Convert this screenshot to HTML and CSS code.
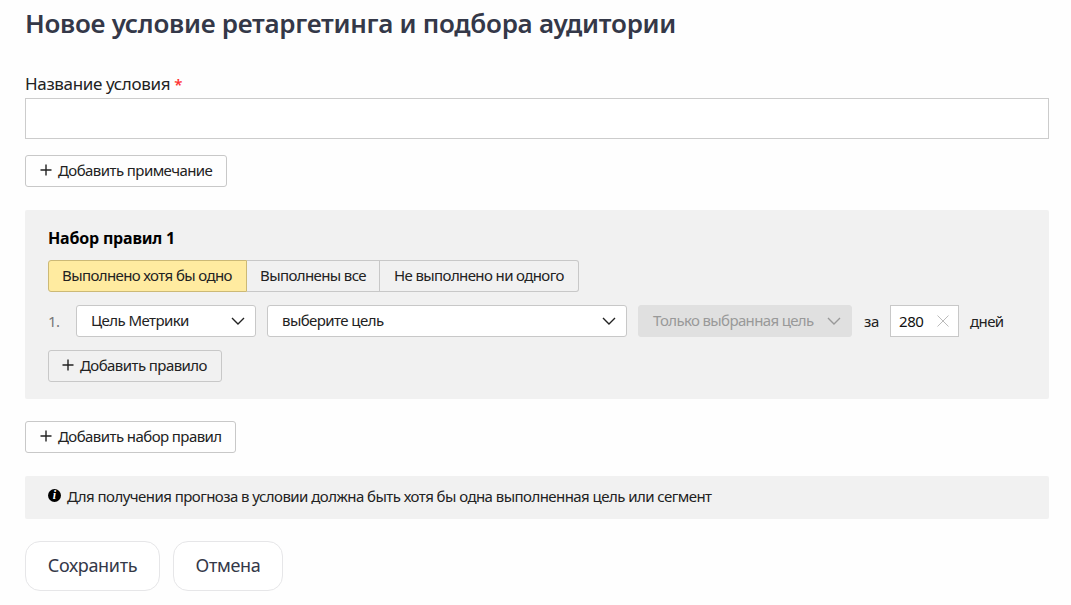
FILE: index.html
```html
<!DOCTYPE html>
<html lang="ru">
<head>
    <meta charset="UTF-8">
    <meta name="viewport" content="width=device-width, initial-scale=1.0">
    <title>Новое условие ретаргетинга</title>
    <link rel="stylesheet" href="styles.css">
</head>
<body>
    <h1>Новое условие ретаргетинга и подбора аудитории</h1>

    <label class="field-label" for="conditionName"><span class="label-text">Название условия</span> <span class="required">*</span></label>
    <input class="name-input" id="conditionName" type="text">

    <button class="btn add-note">
        <svg class="plus" viewBox="0 0 12 12"><path d="M6 0.5V11.5M0.5 6H11.5"/></svg>
        <span>Добавить примечание</span>
    </button>

    <div class="rules-box">
        <h2>Набор правил 1</h2>

        <div class="tabs">
            <button class="tab tab-any active"><span>Выполнено хотя бы одно</span></button>
            <button class="tab tab-all"><span>Выполнены все</span></button>
            <button class="tab tab-none"><span>Не выполнено ни одного</span></button>
        </div>

        <div class="rule">
            <span class="rule-number">1.</span>
            <button class="select select-type">
                <span>Цель Метрики</span>
                <svg class="arrow" viewBox="0 0 14 8"><path d="M1 1L7 7L13 1"/></svg>
            </button>
            <button class="select select-goal">
                <span>выберите цель</span>
                <svg class="arrow" viewBox="0 0 14 8"><path d="M1 1L7 7L13 1"/></svg>
            </button>
            <button class="select select-only" disabled>
                <span>Только выбранная цель</span>
                <svg class="arrow" viewBox="0 0 14 8"><path d="M1 1L7 7L13 1"/></svg>
            </button>
            <span class="rule-text rule-for">за</span>
            <div class="days">
                <span>280</span>
                <svg class="clear" viewBox="0 0 12 12"><path d="M0.5 0.5L11.5 11.5M11.5 0.5L0.5 11.5"/></svg>
            </div>
            <span class="rule-text rule-days">дней</span>
        </div>

        <button class="btn add-rule">
            <svg class="plus" viewBox="0 0 12 12"><path d="M6 0.5V11.5M0.5 6H11.5"/></svg>
            <span>Добавить правило</span>
        </button>
    </div>

    <button class="btn add-set">
        <svg class="plus" viewBox="0 0 12 12"><path d="M6 0.5V11.5M0.5 6H11.5"/></svg>
        <span>Добавить набор правил</span>
    </button>

    <div class="info">
        <span class="info-icon">i</span>
        <span class="info-text">Для получения прогноза в условии должна быть хотя бы одна выполненная цель или сегмент</span>
    </div>

    <div class="actions">
        <button class="action save"><span>Сохранить</span></button>
        <button class="action cancel"><span>Отмена</span></button>
    </div>
</body>
</html>
```
FILE: styles.css
```css
* {
    box-sizing: border-box;
}
body {
    margin: 0;
    padding: 5px 22px 0 25px;
    height: 605px;
    overflow: hidden;
    display: flex;
    flex-direction: column;
    align-items: flex-start;
    background-color: #fefefe;
    color: #222;
    font-family: "Noto Sans", sans-serif;
    font-size: 15px;
    line-height: 20px;
    letter-spacing: -0.57px;
    white-space: nowrap;
}
button, input {
    font: inherit;
    color: inherit;
    letter-spacing: inherit;
    margin: 0;
}
h1 {
    margin: 0;
    font-size: 26px;
    font-weight: 600;
    line-height: 36px;
    letter-spacing: -0.28px;
    color: #343848;
}
.field-label {
    margin-top: 31px;
    height: 26px;
    line-height: 24px;
    font-size: 17px;
    letter-spacing: -0.35px;
}
.required {
    color: #f33;
    font-size: 15px;
    font-weight: 600;
}
.name-input {
    width: 100%;
    height: 41px;
    border: 1px solid #ccc;
    background-color: #fff;
}
svg {
    fill: none;
    stroke: #222;
    flex: none;
}
.btn {
    display: flex;
    align-items: center;
    gap: 6px;
    height: 32px;
    padding: 0 0 2px 14px;
    border: 1px solid #c8c8c8;
    border-radius: 3px;
    background-color: transparent;
}
.plus {
    width: 12px;
    height: 12px;
    stroke-width: 1.4;
}
.add-note {
    margin-top: 16px;
    width: 202px;
}
.rules-box {
    width: 100%;
    height: 189px;
    margin-top: 23px;
    padding: 18px 23px 0;
    border-radius: 2px;
    background-color: #f1f1f1;
}
h2 {
    margin: 0;
    font-size: 16px;
    font-weight: 700;
    line-height: 20px;
    letter-spacing: -0.2px;
    color: #000;
}
.tabs {
    display: flex;
    margin-top: 12px;
}
.tab {
    height: 32px;
    padding: 0 0 3px 14px;
    text-align: left;
    border: 1px solid #c8c8c8;
    border-left: none;
    background-color: transparent;
    letter-spacing: -0.61px;
}
.tab-any {
    width: 199px;
}
.tab-all {
    width: 133px;
    padding-left: 13px;
}
.tab-none {
    width: 199px;
    border-radius: 0 3px 3px 0;
}
.tab.active {
    padding-left: 13px;
    border: 1px solid #ccb976;
    border-radius: 3px 0 0 3px;
    background-color: #ffeba0;
}
.rule {
    display: flex;
    align-items: center;
    height: 32px;
    margin-top: 13px;
}
.rule-number {
    width: 28px;
    color: #777;
}
.select {
    display: flex;
    align-items: center;
    justify-content: space-between;
    height: 32px;
    padding: 0 10px 2px 14px;
    margin-right: 11px;
    border: 1px solid #c8c8c8;
    border-radius: 3px;
    background-color: #fff;
}
.arrow {
    width: 14px;
    height: 8px;
    margin-top: 2px;
    stroke-width: 1.4;
}
.select-type {
    width: 180px;
}
.select-goal {
    width: 360px;
}
.select-only {
    width: 214px;
    margin-right: 12px;
    border-color: #e0e0e0;
    background-color: #e0e0e0;
    color: #999;
    letter-spacing: -0.65px;
}
.select-only .arrow {
    stroke: #999;
}
.rule-for {
    width: 26px;
    letter-spacing: -0.3px;
}
.days {
    display: flex;
    align-items: center;
    justify-content: space-between;
    width: 69px;
    height: 32px;
    margin-right: 11px;
    padding: 0 9px 0 8px;
    border: 1px solid #c8c8c8;
    background-color: #fff;
    color: #111;
    letter-spacing: -0.4px;
}
.clear {
    width: 12px;
    height: 12px;
    stroke: #bbb;
}
.add-rule {
    width: 174px;
    margin-top: 13px;
    padding-left: 13px;
}
.add-set {
    width: 211px;
    margin-top: 22px;
}
.info {
    display: flex;
    align-items: center;
    width: 100%;
    height: 43px;
    margin-top: 23px;
    padding: 0 23px 3px;
    gap: 6px;
    border-radius: 2px;
    background-color: #f1f1f1;
}
.info-icon {
    width: 13px;
    height: 13px;
    margin-bottom: 1px;
    border-radius: 50%;
    background-color: #000;
    color: #fff;
    font: italic bold 12px/13px "Liberation Serif", serif;
    letter-spacing: 0;
    text-align: center;
}
.info-text {
    letter-spacing: -0.55px;
}
.actions {
    display: flex;
    gap: 13px;
    margin-top: 22px;
}
.action {
    height: 50px;
    padding: 0 0 3px;
    border: 1px solid #e6e6e8;
    border-radius: 15px;
    background-color: #fff;
    color: #343848;
    font-size: 18px;
    letter-spacing: -0.35px;
}
.save {
    width: 135px;
}
.cancel {
    width: 110px;
}
```
